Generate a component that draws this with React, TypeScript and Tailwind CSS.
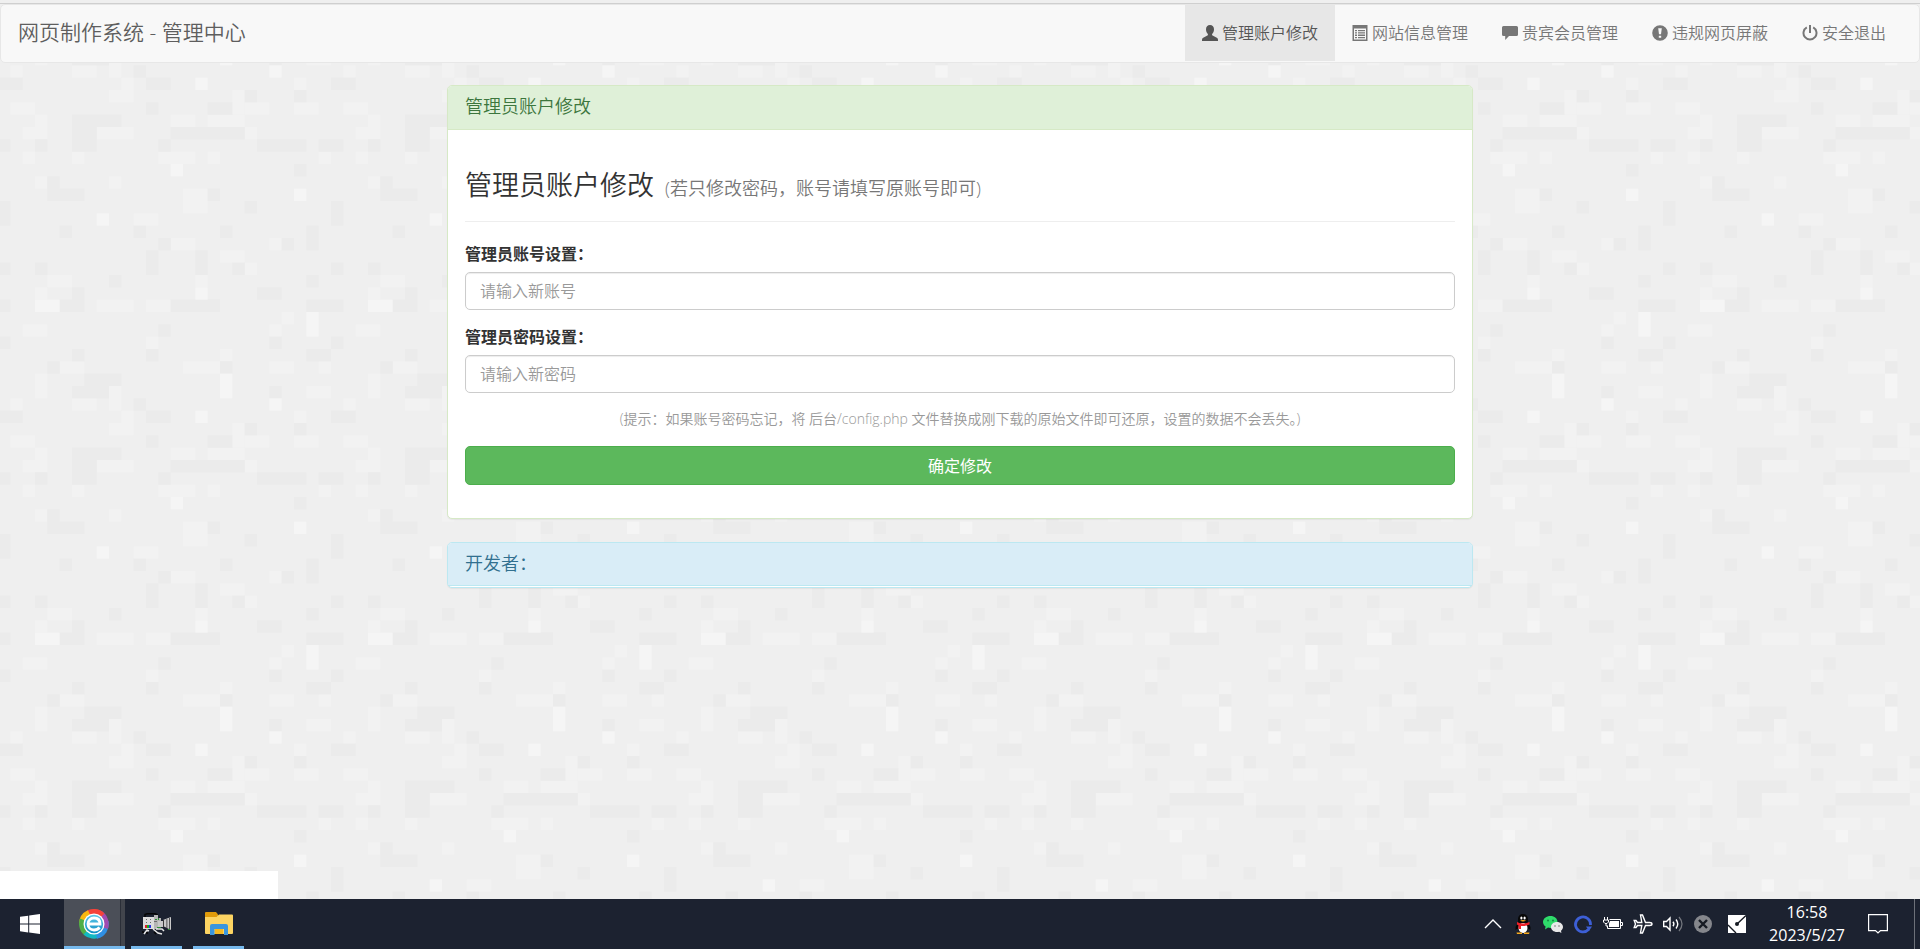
import { useState } from "react";
import type { ReactNode } from "react";

type Cell = [number, number, number, number];

// The backdrop is a 27 x 27 grid of squares: column, row, columns wide, rows high
const brightCells: Cell[] = [
  [24, 2, 1, 1], [8, 4, 1, 1], [14, 0, 1, 1], [25, 12, 1, 2], [22, 19, 1, 1],
  [18, 17, 1, 2], [3, 11, 2, 1], [16, 20, 1, 1], [16, 10, 1, 1],
];

const lightCells: Cell[] = [
  [9, 1, 1, 1], [3, 1, 1, 1], [15, 2, 2, 2], [13, 26, 3, 1], [2, 26, 1, 1],
  [6, 26, 1, 1], [17, 26, 1, 1], [26, 26, 1, 1], [11, 4, 2, 1], [16, 9, 1, 1],
  [3, 10, 1, 1], [8, 11, 3, 1], [2, 13, 2, 1], [20, 8, 1, 1], [22, 13, 1, 1],
  [12, 14, 1, 1], [18, 15, 1, 1], [15, 16, 3, 1], [5, 16, 2, 1], [22, 16, 2, 1],
  [26, 16, 1, 1], [24, 20, 1, 1], [10, 20, 1, 1], [9, 21, 2, 1], [3, 17, 1, 2],
  [1, 19, 1, 1], [6, 19, 2, 1], [9, 18, 1, 2], [14, 23, 2, 1], [17, 23, 3, 1],
  [8, 24, 3, 1], [19, 21, 1, 2], [20, 22, 2, 1], [24, 22, 2, 1], [3, 23, 1, 1],
  [1, 22, 2, 1], [2, 24, 2, 1], [20, 24, 1, 1], [25, 18, 2, 1], [23, 12, 1, 1],
  [22, 6, 1, 1], [14, 6, 2, 1], [18, 7, 2, 1], [4, 9, 2, 1], [12, 11, 2, 1],
];

const darkCells: Cell[] = [
  [24, 0, 1, 1], [17, 2, 1, 1], [20, 3, 1, 1], [5, 5, 1, 1], [18, 5, 1, 1],
  [11, 5, 1, 1], [23, 6, 1, 1], [13, 6, 1, 1], [12, 7, 1, 2], [16, 7, 1, 2],
  [3, 8, 1, 1], [9, 9, 1, 1], [19, 8, 1, 1], [25, 9, 1, 1], [0, 8, 1, 1],
  [21, 10, 2, 1], [6, 10, 1, 1], [5, 11, 2, 1], [14, 11, 4, 1], [17, 11, 1, 1],
  [25, 11, 2, 1], [0, 11, 1, 1], [4, 1, 1, 1], [4, 2, 3, 1], [13, 13, 1, 1],
  [22, 14, 1, 1], [12, 15, 1, 1], [6, 15, 1, 1], [4, 16, 1, 1], [18, 16, 1, 1],
  [7, 17, 3, 1], [6, 18, 3, 1], [22, 18, 1, 1], [11, 19, 1, 1], [12, 20, 2, 1],
  [0, 20, 2, 1], [20, 21, 1, 1], [24, 21, 1, 1], [12, 22, 1, 1], [17, 22, 2, 1],
  [6, 23, 4, 1], [6, 24, 2, 2], [13, 25, 1, 1], [3, 25, 1, 1], [24, 25, 1, 1],
  [21, 25, 3, 1], [26, 25, 1, 1], [0, 25, 1, 1], [25, 15, 2, 1], [0, 14, 1, 1],
  [25, 5, 1, 2], [14, 24, 6, 1], [0, 3, 1, 2],
];

const Cells = ({ cells, fill }: { cells: Cell[]; fill: string }) => (
  <g fill={fill}>
    {cells.map(([x, y, w, h], idx) => (
      <rect key={idx} x={x} y={y} width={w} height={h} />
    ))}
  </g>
);

const Backdrop = () => (
  <svg className="absolute inset-0 -z-10 h-full w-full" aria-hidden="true">
    <defs>
      <pattern
        id="squares"
        x="-2"
        y="-169"
        width="333"
        height="333"
        patternUnits="userSpaceOnUse"
        viewBox="0 0 27 27"
      >
        <rect width="27" height="27" fill="#efefef" />
        <Cells cells={lightCells} fill="#f2f2f2" />
        <Cells cells={darkCells} fill="#ebebeb" />
        <Cells cells={brightCells} fill="#f5f5f5" />
      </pattern>
    </defs>
    <rect width="100%" height="100%" fill="url(#squares)" />
  </svg>
);

const NavIcon = ({ children }: { children: ReactNode }) => (
  <svg
    viewBox="0 0 16 16"
    className="h-4 w-4 shrink-0"
    fill="currentColor"
    aria-hidden="true"
  >
    {children}
  </svg>
);

const navItems = [
  {
    label: "管理账户修改",
    icon: (
      <path d="M8 0c2.500 0 4 1.700 4 4.200 0 1.900-.8 3.600-1.700 4.600-.4.500-.3 1.500.3 1.800l4.200 2.200c.8.400 1.200 1 1.200 1.900V16H0v-1.300c0-.9.400-1.500 1.200-1.900l4.200-2.200c.6-.3.7-1.300.3-1.800C4.800 7.800 4 6.100 4 4.200 4 1.700 5.500 0 8 0z" />
    ),
  },
  {
    label: "网站信息管理",
    icon: (
      <>
        <path fillRule="evenodd" d="M.5 0h15v16H.5zM2 3.500v11h12v-11z" />
        <path d="M3 5h2v1.300H3zM6 5h7v1.300H6zM3 7.300h2v1.300H3zM6 7.300h7v1.300H6zM3 9.600h2v1.300H3zM6 9.600h7v1.300H6zM3 11.900h2v1.300H3zM6 11.900h7v1.300H6z" />
      </>
    ),
  },
  {
    label: "贵宾会员管理",
    icon: (
      <path d="M1.500 1h13A1.500 1.500 0 0 1 16 2.500v7a1.500 1.500 0 0 1-1.500 1.500H7l-3.800 4V11H1.500A1.500 1.500 0 0 1 0 9.500v-7A1.500 1.500 0 0 1 1.500 1z" />
    ),
  },
  {
    label: "违规网页屏蔽",
    icon: (
      <path
        fillRule="evenodd"
        d="M8 .2a7.800 7.800 0 1 1 0 15.600A7.800 7.800 0 0 1 8 .2zM6.200 3.300 7 9.200h2l.8-5.900zM6.800 10.700v2.100h2.400v-2.100z"
      />
    ),
  },
  {
    label: "安全退出",
    icon: (
      <path
        d="M8 0v8M4.800 2.400a6.500 6.500 0 1 0 6.400 0"
        fill="none"
        stroke="currentColor"
        strokeWidth="2"
      />
    ),
  },
];

const Navbar = () => {
  const [active, setActive] = useState(0);
  return (
    <header className="bg-[#efefef]">
      <div className="h-1 border-b border-[#cfcfcf]" />
      <nav className="flex flex-wrap items-center justify-between rounded-[5px] border border-[#e7e7e7] bg-[#f8f8f8] pb-px">
        <a href="#" className="px-[17px] text-[21px] text-[#5e5e5e]">
          网页制作系统 - 管理中心
        </a>
        <ul className="flex pr-4">
          {navItems.map(({ label, icon }, idx) => (
            <li key={label}>
              <a
                href="#"
                onClick={() => setActive(idx)}
                className={
                  idx === active
                    ? "flex h-14 items-center gap-1 bg-[#e7e7e7] px-[17px] text-[#555555]"
                    : "flex h-14 items-center gap-1 px-[17px] text-[#777777]"
                }
              >
                <NavIcon>{icon}</NavIcon>
                {label}
              </a>
            </li>
          ))}
        </ul>
      </nav>
    </header>
  );
};

const Field = ({
  id,
  label,
  placeholder,
}: {
  id: string;
  label: string;
  placeholder: string;
}) => (
  <div className="mb-[15px]">
    <label htmlFor={id} className="mb-1.5 block leading-6 font-bold">
      {label}
    </label>
    <input
      id={id}
      type="text"
      placeholder={placeholder}
      className="block h-[38px] w-full rounded-[5px] border border-[#cccccc] bg-white px-3.5 shadow-[inset_0_1px_1px_rgba(0,0,0,0.075)] placeholder:text-[#999999]"
    />
  </div>
);

const AccountPanel = () => (
  <section className="rounded-[5px] border border-[#d6e9c6] bg-white shadow-[0_1px_1px_rgba(0,0,0,0.05)]">
    <h2 className="h-11 rounded-t border-b border-[#d6e9c6] bg-[#dff0d8] px-[17px] text-lg leading-10 text-[#3c763d]">
      管理员账户修改
    </h2>
    <div className="px-[17px] pt-[34px]">
      <h3 className="mb-5 border-b border-[#eeeeee] pb-[15px] text-[27px] leading-[42px]">
        管理员账户修改{" "}
        <small className="ml-1 text-lg leading-6 text-[#777777]">
          (若只修改密码，账号请填写原账号即可)
        </small>
      </h3>
      <form onSubmit={(e) => e.preventDefault()} className="pb-[33px]">
        <Field
          id="account"
          label="管理员账号设置："
          placeholder="请输入新账号"
        />
        <Field
          id="password"
          label="管理员密码设置："
          placeholder="请输入新密码"
        />
        <p className="mb-4 text-center text-sm leading-[22px] text-[#999999]">
          (提示：如果账号密码忘记，将 后台/config.php
          文件替换成刚下载的原始文件即可还原，设置的数据不会丢失。)
        </p>
        <button
          type="submit"
          className="block h-[39px] w-full rounded-[5px] border border-[#4cae4c] bg-[#5cb85c] font-normal text-white"
        >
          确定修改
        </button>
      </form>
    </div>
  </section>
);

const DeveloperPanel = () => (
  <section className="mt-[23px] rounded-[5px] border border-[#bce8f1] bg-white pb-px shadow-[0_1px_1px_rgba(0,0,0,0.05)]">
    <h2 className="h-[43px] rounded-t border-b border-[#bce8f1] bg-[#d9edf7] px-[17px] text-lg leading-10 text-[#31708f]">
      开发者：
    </h2>
  </section>
);

const WindowsLogo = () => (
  <svg viewBox="0 0 20 20" className="h-5 w-5" fill="#ffffff">
    <path d="M0 2.800 8.200 1.700v7.900H0zM9.200 1.500 20 0v9.600H9.200zM0 10.600h8.200v7.800L0 17.300zM9.200 10.600H20V20L9.200 18.500z" />
  </svg>
);

const BrowserLogo = () => (
  <svg viewBox="0 0 30 30" className="h-[30px] w-[30px]">
    <defs>
      <linearGradient id="browserBlue" x1="0" y1="0" x2="0" y2="1">
        <stop offset="0" stopColor="#5fc8e8" />
        <stop offset="1" stopColor="#118fc4" />
      </linearGradient>
    </defs>
    <path d="M15 15 5 4A15 15 0 0 1 24 3z" fill="#f5433a" />
    <path d="M15 15 0 15A15 15 0 0 1 9 1.200z" fill="#fbb80f" />
    <path d="M15 15 7 27.500A15 15 0 0 1 1 9.500z" fill="#4fae47" />
    <path d="M15 15 22 28A15 15 0 0 1 4.500 25.500z" fill="#12b8c2" />
    <path d="M15 15 29.500 12A15 15 0 0 1 18 29.700z" fill="#2f8fe3" />
    <path d="M15 15 22 1.800A15 15 0 0 1 28.800 20z" fill="#a04bb0" />
    <path d="M15 15 14 0A15 15 0 0 1 25.500 4.500z" fill="#f5433a" />
    <circle cx="15" cy="15" r="10.500" fill="#ffffff" />
    <circle cx="15" cy="15" r="9.200" fill="url(#browserBlue)" />
    <path
      d="M9 15h12c0-4-2.500-6-6-6s-6 2.500-6 6 2.500 6 6 6c2.500 0 4.300-.9 5.500-2.600"
      fill="none"
      stroke="#ffffff"
      strokeWidth="2.800"
    />
  </svg>
);

const CameraLogo = () => (
  <svg viewBox="0 0 30 22" className="h-[22px] w-[30px]">
    <path d="M3 4V1.500L5 .8h8l2 .7V4" fill="none" stroke="#050505" strokeWidth="1.500" />
    <path d="M1 4h12v12H1z" fill="#dcdcdc" />
    <path d="M12 2h4v3h3v3h-3v8h-4z" fill="#b5b5b5" />
    <path d="M16 8h5v6h-5zM21 7l8-3v13l-8-4z" fill="#c9c9c9" />
    <path d="M21 7h1v7h-1zM24.500 6h.8v9h-.8zM27 5h.8v11H27z" fill="#3a3a3a" />
    <path d="M4 6h1v1H4zM8 6h1v1H8zM4 9h1v1H4zM8 9h1v1H8zM12 8h3v1h-3z" fill="#6b6b6b" />
    <path d="M3 12h2v3H3z" fill="#e0202c" />
    <path d="M5 12h2v3H5z" fill="#16b51d" />
    <path d="M7 12h2v3H7z" fill="#2735e8" />
    <path d="M13 6h2v1h-2zM16 5h1v2h-1zM15 14h4v1h-4zM26 16h2v1h-2z" fill="#2f8f34" />
    <path d="M2 21 5 17l2 1M11 16l5 4 4 1M14 16h6l2 2" fill="none" stroke="#e6e6e6" strokeWidth="1.500" />
    <path d="M0 19h2M4 20h2M12 19l2 2" stroke="#050505" strokeWidth="1.500" />
  </svg>
);

const FolderLogo = () => (
  <svg viewBox="0 0 28 24" className="h-6 w-7">
    <path d="M0 1q0-1 1-1h10l2 2.500V7H0z" fill="#e09b0a" />
    <path d="M0 5h11.500L14 2.500h13q1 0 1 1V21q0 1-1 1H1q-1 0-1-1z" fill="#fcd462" />
    <path d="M10 17h8v5h-8z" fill="#f5b921" />
    <path d="M5 23V14q0-2 2-2h14q2 0 2 2v9h-4v-6H9.500v6z" fill="#3a96dd" />
  </svg>
);

const TrayIcon = ({
  label,
  children,
}: {
  label: string;
  children: ReactNode;
}) => (
  <button
    type="button"
    aria-label={label}
    className="flex w-[30px] items-center justify-center"
  >
    <svg viewBox="0 0 20 20" className="h-5 w-5" fill="none" stroke="#ffffff">
      {children}
    </svg>
  </button>
);

const Tray = () => (
  <div className="flex items-stretch gap-1">
    <div className="flex items-stretch">
      <TrayIcon label="更多">
        <path d="m2 14 8-8 8 8" strokeWidth="1.400" />
      </TrayIcon>
      <TrayIcon label="QQ">
        <g stroke="none">
          <path d="M10 0c3.500 0 5 2.600 5 5.500v3l2.500 4.500v3l-2-1.500-1.500 3H6l-1.500-3-2 1.500v-3L5 8.500v-3C5 2.600 6.500 0 10 0z" fill="#080808" />
          <ellipse cx="10" cy="14" rx="4.500" ry="5" fill="#ffffff" />
          <ellipse cx="8.400" cy="4" rx="1.100" ry="1.500" fill="#ffffff" />
          <ellipse cx="11.600" cy="4" rx="1.100" ry="1.500" fill="#ffffff" />
          <path d="M7 6.500q3-1 6 0-3 2-6 0zM3.500 18.500h5.500V20H4zM11 18.500h5.500L16 20h-5z" fill="#f5a81c" />
          <path d="M4 8q6 3 12.500 0v2.500Q12 12.500 8 12v3H5.500v-3.500L4 10.500z" fill="#ee2028" />
        </g>
      </TrayIcon>
      <TrayIcon label="微信">
        <g stroke="none">
          <path d="M7.500 2c4 0 7 2.600 7 6s-3 6-7 6c-1 0-1.700-.1-2.500-.4L2 15.500l.6-2.900C1 11.500 0 9.900 0 8c0-3.400 3.400-6 7.500-6z" fill="#2fdc6b" />
          <path d="M14 8c3.400 0 6 2.200 6 5 0 1.500-.8 2.900-2 3.800l.4 2.200-2.300-1.300c-.7.200-1.400.3-2.100.3-3.400 0-6-2.200-6-5s2.600-5 6-5z" fill="#e9e9e9" />
          <circle cx="5" cy="6.500" r="1" fill="#148941" />
          <circle cx="10" cy="6.500" r="1" fill="#148941" />
          <circle cx="12" cy="12" r=".8" fill="#777777" />
          <circle cx="16" cy="12" r=".8" fill="#777777" />
        </g>
      </TrayIcon>
      <TrayIcon label="浏览器助手">
        <path d="M15.500 15.500A7.500 7.500 0 1 1 17.500 11" stroke="#3d5fd6" strokeWidth="2.800" />
        <path d="M13 12.500h6l-3 4.500z" fill="#3d5fd6" stroke="none" />
      </TrayIcon>
      <TrayIcon label="电池">
        <path d="M6.500 5.500h11v9H4.500V12" />
        <path d="M7 7h9v6H6V9.500z" fill="#ffffff" stroke="none" />
        <path d="M17.500 8.500h2v3h-2M1.500 3v3M4.500 3v3M.5 6h5v2L4 9.500H2L.5 8zM3 9.500V12h2" />
      </TrayIcon>
      <TrayIcon label="飞行模式">
        <path
          d="M19 10c0-1-1-1.500-2.500-1.500h-4L9.500 1h-2l1.300 7.500H4.500L3 6.500H1.200L2.500 10l-1.300 3.500H3l1.500-2h4.300L7.500 19h2l3-7.500h4c1.500 0 2.500-.5 2.500-1.500z"
          strokeWidth="1.400"
        />
      </TrayIcon>
      <TrayIcon label="音量">
        <path d="M.7 7.500h2.800L7 4v12l-3.500-3.500H.7z" strokeWidth="1.400" />
        <path d="M10 7.800q1.800 2.200 0 4.400M13 5.500q3.500 4.500 0 9" strokeWidth="1.400" />
        <path d="M16 3q6 7 0 14" stroke="#75787f" strokeWidth="1.200" />
      </TrayIcon>
      <TrayIcon label="已断开">
        <circle cx="10" cy="10" r="9" fill="#85878c" stroke="none" />
        <path d="m6 6 8 8M14 6l-8 8" stroke="#161a22" strokeWidth="2.400" />
      </TrayIcon>
    </div>
    <div className="flex items-stretch">
      <TrayIcon label="输入工具">
        <path d="M1 1h18v18H1z" fill="#ffffff" stroke="none" />
        <path d="M19 1.500 10 10M1 11l8 8" stroke="#161a22" strokeWidth="1.400" />
        <circle cx="10" cy="10" r="2" fill="#161a22" stroke="none" />
      </TrayIcon>
      <time className="flex w-[110px] flex-col justify-center text-center leading-[23px] font-normal text-white">
        <span>16:58</span>
        <span>2023/5/27</span>
      </time>
      <button
        type="button"
        aria-label="通知"
        className="mr-5 flex w-8 items-center justify-center"
      >
        <svg viewBox="0 0 20 20" className="h-5 w-5" fill="none" stroke="#ffffff">
          <path d="M.6.600h18.800v16H12.500L10 19l-2.500-2.400H.6z" strokeWidth="1.200" />
        </svg>
      </button>
      <div className="w-1.5 border-l border-[#6d7179]" />
    </div>
  </div>
);

const Taskbar = () => (
  <footer className="flex h-[50px] items-stretch justify-between bg-[#1c2230]">
    <div className="flex items-stretch">
      <button
        type="button"
        aria-label="开始"
        className="flex w-16 items-center justify-center pr-1"
      >
        <WindowsLogo />
      </button>
      <button
        type="button"
        aria-label="浏览器"
        className="flex w-[61px] items-center border-b-[3px] border-[#76b9ed] bg-[#4b4f58]"
      >
        <span className="flex h-full flex-1 items-center justify-center pt-[3px] pl-1">
          <BrowserLogo />
        </span>
        <span className="h-full w-[5px] border-l border-[#2b2f38] bg-[#42454c]" />
      </button>
      <button
        type="button"
        aria-label="录像"
        className="ml-1.5 flex w-[51px] items-center justify-center border-b-[3px] border-[#76b9ed] pt-[3px]"
      >
        <CameraLogo />
      </button>
      <button
        type="button"
        aria-label="文件资源管理器"
        className="ml-[11px] flex w-[51px] items-center justify-center border-b-[3px] border-[#76b9ed] pt-[3px]"
      >
        <FolderLogo />
      </button>
    </div>
    <Tray />
  </footer>
);

const App = () => {
  return (
    <div className="relative isolate flex min-h-screen flex-col font-['Open_Sans','Noto_Sans_CJK_SC',sans-serif] text-base font-[350] text-[#333333]">
      <Backdrop />
      <Navbar />
      <main className="mx-auto mt-[22px] w-full max-w-[1026px] flex-1">
        <AccountPanel />
        <DeveloperPanel />
      </main>
      {/* LINK STATUS */}
      <div className="h-7 w-[278px] bg-white" />
      <Taskbar />
    </div>
  );
};

export default App;
